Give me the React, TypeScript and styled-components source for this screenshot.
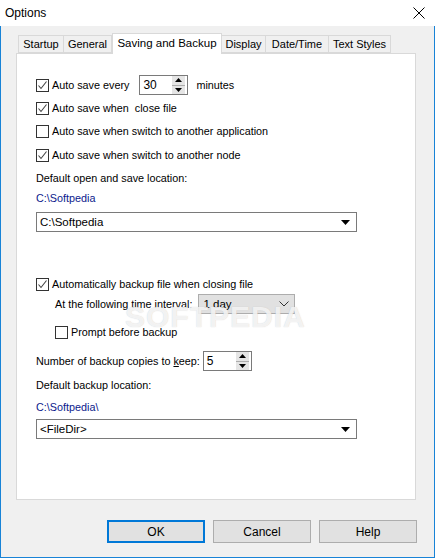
import { createGlobalStyle, styled } from "styled-components";

const GlobalStyle = createGlobalStyle`
  html, body {
    margin: 0;
    padding: 0;
    background: #ffffff;
  }
  body {
    font-family: "Liberation Sans", Arial, sans-serif;
    font-size: 10.8px;
    color: #000000;
  }
`;

const Window = styled.div`
  width: 435px;
  height: 558px;
  display: flex;
  flex-direction: column;
  box-sizing: border-box;
  background: #f0f0f0;
  overflow: hidden;
`;

const TitleBar = styled.div`
  height: 26px;
  flex: none;
  background: #ffffff;
  display: flex;
  align-items: center;
  justify-content: space-between;
  padding: 0 10px 0 5px;
  font-size: 12px;
`;

const Body = styled.div`
  flex: 1;
  display: flex;
  flex-direction: column;
  border: 1px solid #1883d7;
  border-top: none;
  padding-left: 15px;
`;

const TabStrip = styled.div`
  display: flex;
  align-items: flex-end;
  margin-top: 6px;
  padding-left: 2px;
  height: 21px;
  position: relative;
  z-index: 1;
`;

const Tab = styled.div<{ $w: number; $active?: boolean }>`
  width: ${(p) => p.$w}px;
  box-sizing: border-box;
  height: ${(p) => (p.$active ? 21 : 18)}px;
  margin-left: ${(p) => (p.$active ? 0 : -1)}px;
  margin-bottom: ${(p) => (p.$active ? -1 : 0)}px;
  border: 1px solid #d9d9d9;
  border-bottom: ${(p) => (p.$active ? "none" : "1px solid #d9d9d9")};
  background: ${(p) => (p.$active ? "#ffffff" : "#f0f0f0")};
  display: flex;
  align-items: center;
  justify-content: center;
  font-size: ${(p) => (p.$active ? 11.5 : 11)}px;
  padding-bottom: ${(p) => (p.$active ? 3 : 0)}px;
  &:first-child {
    margin-left: 0;
  }
`;

const Panel = styled.div`
  width: 400px;
  height: 447px;
  box-sizing: border-box;
  background: #ffffff;
  border: 1px solid #d9d9d9;
  display: flex;
  flex-direction: column;
  padding-left: 19px;
  position: relative;
`;

const Row = styled.div<{ $mt: number; $indent?: number }>`
  height: 20px;
  margin-top: ${(p) => p.$mt}px;
  margin-left: ${(p) => p.$indent ?? 0}px;
  display: flex;
  align-items: center;
  white-space: pre;
`;

const Label = styled.span<{ $link?: boolean }>`
  color: ${(p) => (p.$link ? "#0b1a8c" : "#000000")};
`;

const Box = styled.span`
  width: 13px;
  height: 13px;
  box-sizing: border-box;
  border: 1px solid #333333;
  background: #ffffff;
  margin-right: 3px;
  flex: none;
  display: flex;
  align-items: center;
  justify-content: center;
`;

const Spin = styled.div<{ $ml: number }>`
  width: 49px;
  height: 20px;
  box-sizing: border-box;
  border: 1px solid #7a7a7a;
  margin-left: ${(p) => p.$ml}px;
  margin-right: 8px;
  background: #ffffff;
  display: flex;
  align-items: center;
  justify-content: space-between;
  padding-left: 3px;
  font-size: 12px;
`;

const SpinButtons = styled.div`
  width: 13px;
  height: 18px;
  margin-right: 2px;
  display: flex;
  flex-direction: column;
  background: #e5e5e5;
  border-left: 1px solid #ffffff;
`;

const SpinHalf = styled.div<{ $top?: boolean }>`
  flex: 1;
  display: flex;
  align-items: center;
  justify-content: center;
  border-bottom: ${(p) => (p.$top ? "1px solid #adadad" : "none")};
`;

const Combo = styled.div`
  width: 321px;
  height: 20px;
  box-sizing: border-box;
  border: 1px solid #7a7a7a;
  background: #ffffff;
  display: flex;
  align-items: center;
  justify-content: space-between;
  padding: 0 6px 0 3px;
  font-size: 11.5px;
`;

const Select = styled.div`
  width: 97px;
  height: 20px;
  box-sizing: border-box;
  border: 1px solid #adadad;
  background: #e1e1e1;
  margin-left: 6px;
  display: flex;
  align-items: center;
  justify-content: space-between;
  padding: 0 5px 0 4px;
  font-size: 11.5px;
`;

const Watermark = styled.div`
  position: absolute;
  left: 108px;
  top: 246px;
  font-family: "Liberation Sans", Arial, sans-serif;
  font-weight: bold;
  font-size: 30px;
  letter-spacing: 1px;
  color: rgba(255, 255, 255, 0.75);
  text-shadow: 0 0 1px rgba(170, 170, 170, 0.6);
  pointer-events: none;
`;

const ButtonRow = styled.div`
  display: flex;
  justify-content: flex-end;
  gap: 8px;
  margin-top: 20px;
  padding-right: 17px;
`;

const Button = styled.div<{ $default?: boolean }>`
  width: 98px;
  height: 23px;
  box-sizing: border-box;
  background: #e1e1e1;
  border: ${(p) => (p.$default ? "2px solid #0078d7" : "1px solid #adadad")};
  display: flex;
  align-items: center;
  justify-content: center;
  font-size: 12px;
`;

function Check({ on, label }: { on?: boolean; label: string }) {
  return (
    <>
      <Box>
        {on ? (
          <svg width="11" height="11" viewBox="0 0 11 11">
            <path d="M1.5 5.5 L4 8.5 L9.5 1.5" fill="none" stroke="#444" strokeWidth="1.1" />
          </svg>
        ) : null}
      </Box>
      <Label>{label}</Label>
    </>
  );
}

function SpinBox({ value, ml }: { value: string; ml: number }) {
  return (
    <Spin $ml={ml}>
      <span>{value}</span>
      <SpinButtons>
        <SpinHalf $top>
          <svg width="7" height="4" viewBox="0 0 7 4">
            <path d="M0 4 L3.5 0 L7 4 Z" fill="#000" />
          </svg>
        </SpinHalf>
        <SpinHalf>
          <svg width="7" height="4" viewBox="0 0 7 4">
            <path d="M0 0 L3.5 4 L7 0 Z" fill="#000" />
          </svg>
        </SpinHalf>
      </SpinButtons>
    </Spin>
  );
}

const Arrow = () => (
  <svg width="9" height="5" viewBox="0 0 9 5">
    <path d="M0 0 L9 0 L4.5 5 Z" fill="#000" />
  </svg>
);

const tabs = [
  { name: "Startup", w: 46 },
  { name: "General", w: 49 },
  { name: "Saving and Backup", w: 110, active: true },
  { name: "Display", w: 45 },
  { name: "Date/Time", w: 64 },
  { name: "Text Styles", w: 63 },
];

export default function App() {
  return (
    <Window>
      <GlobalStyle />
      <TitleBar>
        <span>Options</span>
        <svg width="12" height="12" viewBox="0 0 12 12">
          <path d="M0.5 0.5 L11.5 11.5 M11.5 0.5 L0.5 11.5" stroke="#000" strokeWidth="1" />
        </svg>
      </TitleBar>
      <Body>
        <TabStrip>
          {tabs.map((t) => (
            <Tab key={t.name} $w={t.w} $active={t.active}>
              {t.name}
            </Tab>
          ))}
        </TabStrip>
        <Panel>
          <Row $mt={21}>
            <Check on label="Auto save every" />
            <SpinBox value="30" ml={10} />
            <Label>minutes</Label>
          </Row>
          <Row $mt={3}>
            <Check on label="Auto save when  close file" />
          </Row>
          <Row $mt={3}>
            <Check label="Auto save when switch to another application" />
          </Row>
          <Row $mt={4}>
            <Check on label="Auto save when switch to another node" />
          </Row>
          <Row $mt={3}>
            <Label>Default open and save location:</Label>
          </Row>
          <Row $mt={0}>
            <Label $link>C:\Softpedia</Label>
          </Row>
          <Row $mt={4}>
            <Combo>
              <span>C:\Softpedia</span>
              <Arrow />
            </Combo>
          </Row>
          <Row $mt={42}>
            <Check on label="Automatically backup file when closing file" />
          </Row>
          <Row $mt={0} $indent={19}>
            <Label>At the following time interval:</Label>
            <Select>
              <span>1 day</span>
              <svg width="10" height="6" viewBox="0 0 10 6">
                <path d="M0.5 0.5 L5 5 L9.5 0.5" fill="none" stroke="#333" strokeWidth="1" />
              </svg>
            </Select>
          </Row>
          <Row $mt={8} $indent={19}>
            <Check label="Prompt before backup" />
          </Row>
          <Row $mt={9}>
            <Label>
              Number of backup copies to <u>k</u>eep:
            </Label>
            <SpinBox value="5" ml={3} />
          </Row>
          <Row $mt={4}>
            <Label>Default backup location:</Label>
          </Row>
          <Row $mt={2}>
            <Label $link>C:\Softpedia\</Label>
          </Row>
          <Row $mt={2}>
            <Combo>
              <span>&lt;FileDir&gt;</span>
              <Arrow />
            </Combo>
          </Row>
          <Watermark>SOFTPEDIA</Watermark>
        </Panel>
        <ButtonRow>
          <Button $default>OK</Button>
          <Button>Cancel</Button>
          <Button>Help</Button>
        </ButtonRow>
      </Body>
    </Window>
  );
}
